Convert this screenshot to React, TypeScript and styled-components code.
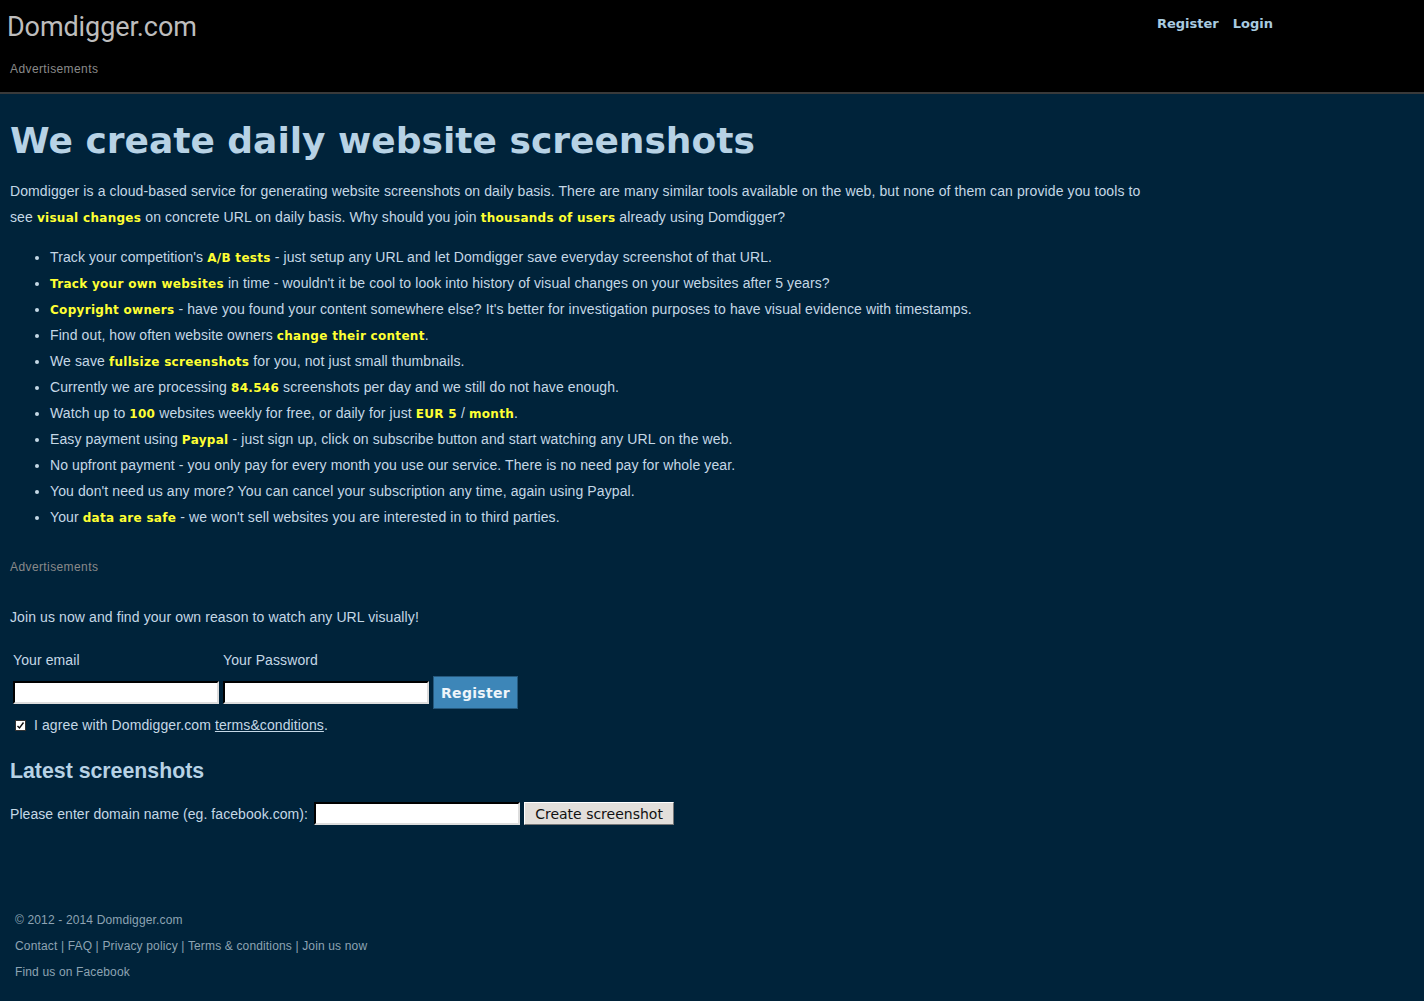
import styled, { createGlobalStyle } from 'styled-components';

const GlobalStyle = createGlobalStyle`
  html, body {
    margin: 0;
    padding: 0;
    background: #00233a;
  }
  body {
    font-family: "Liberation Sans", Arial, sans-serif;
    color: #c5d8e6;
  }
`;

const Header = styled.header`
  background: #000;
  height: 92px;
  border-bottom: 2px solid #3a3a3a;
`;

const HeaderTop = styled.div`
  display: flex;
  justify-content: space-between;
  width: 1273px;
`;

const Logo = styled.div`
  font-family: Roboto, "Liberation Sans", sans-serif;
  font-size: 27px;
  letter-spacing: -0.1px;
  color: #bdbdbd;
  padding: 9px 0 0 7px;
  line-height: 36px;
`;

const Nav = styled.nav`
  display: flex;
  gap: 14px;
  padding-top: 16px;
`;

const NavLink = styled.a`
  font-family: "DejaVu Sans", sans-serif;
  font-weight: bold;
  font-size: 13px;
  color: #a9cbe0;
  text-decoration: none;
`;

const Ads = styled.div<{ $top: number; $left?: number }>`
  font-size: 12px;
  letter-spacing: 0.4px;
  color: #8a8a8a;
  padding-left: ${p => p.$left ?? 0}px;
  margin-top: ${p => p.$top}px;
`;

const Main = styled.main`
  width: 1140px;
  padding: 0 0 0 10px;
`;

const Title = styled.h1`
  font-family: "DejaVu Sans", sans-serif;
  font-weight: bold;
  font-size: 36px;
  color: #b7d2e5;
  margin: 23px 0 13px;
  line-height: 48px;
`;

const Para = styled.p`
  font-size: 14px;
  line-height: 26px;
  letter-spacing: 0.1px;
  margin: 0;
`;

const Hi = styled.strong`
  font-family: "DejaVu Sans", sans-serif;
  font-size: 12px;
  line-height: 1;
  color: #ffff33;
  letter-spacing: 0.3px;
`;

const List = styled.ul`
  margin: 14px 0 0;
  padding-left: 40px;
  font-size: 14px;
  line-height: 26px;
  letter-spacing: 0.1px;
`;

const Join = styled.p`
  font-size: 14px;
  margin: 33px 0 0;
  line-height: 20px;
  letter-spacing: 0.1px;
`;

const FormTable = styled.div`
  display: grid;
  grid-template-columns: 210px 210px auto;
  margin: 24px 0 0 3px;
  align-items: center;
`;

const Label = styled.label`
  font-size: 14px;
  line-height: 18px;
  margin-bottom: 7px;
  letter-spacing: 0.1px;
`;

const TextInput = styled.input`
  width: 206px;
  height: 23px;
  flex-shrink: 0;
  box-sizing: border-box;
  border: 2px inset #ddd;
  border-top-color: #555;
  border-left-color: #555;
  background: #fff;
  margin: 0;
  padding: 1px 3px;
`;

const RegisterButton = styled.button`
  font-family: "DejaVu Sans", sans-serif;
  font-weight: bold;
  font-size: 14px;
  color: #eef5fa;
  background: #3d86b8;
  border: 1px solid #26597d;
  height: 33px;
  width: 85px;
  padding: 0;
  letter-spacing: 0.3px;
`;

const AgreeRow = styled.div`
  display: flex;
  align-items: center;
  gap: 8px;
  margin: 8px 0 0 5px;
  font-size: 14px;
  letter-spacing: 0.1px;
`;

const Check = styled.span`
  width: 11px;
  height: 11px;
  background: #fff;
  border: 1px solid #333;
  box-sizing: border-box;
  display: inline-flex;
  align-items: center;
  justify-content: center;
`;

const TermsLink = styled.a`
  color: #c5d8e6;
  text-decoration: underline;
`;

const SubTitle = styled.h2`
  font-family: "Liberation Sans", Arial, sans-serif;
  font-weight: bold;
  font-size: 21.3px;
  color: #b7d2e5;
  margin: 23px 0 0;
  line-height: 30px;
`;

const DomainRow = styled.div`
  display: flex;
  align-items: center;
  margin-top: 16px;
  font-size: 14px;
  letter-spacing: 0.07px;
`;

const DomainLabel = styled.span`
  margin-right: 6px;
`;

const GrayButton = styled.button`
  font-family: "DejaVu Sans", sans-serif;
  font-size: 14px;
  color: #111;
  background: #e2dfdb;
  border: 1px solid #fff;
  border-right-color: #777;
  border-bottom-color: #777;
  height: 23px;
  width: 150px;
  margin-left: 4px;
  padding: 0;
`;

const Footer = styled.footer`
  padding: 82px 0 20px 15px;
  font-size: 12px;
  letter-spacing: 0.15px;
  color: #8ea3b3;
  line-height: 26px;
`;

const FooterLink = styled.a`
  color: #8ea3b3;
  text-decoration: none;
`;

const bullets: React.ReactNode[] = [
  <>Track your competition's <Hi>A/B tests</Hi> - just setup any URL and let Domdigger save everyday screenshot of that URL.</>,
  <><Hi>Track your own websites</Hi> in time - wouldn't it be cool to look into history of visual changes on your websites after 5 years?</>,
  <><Hi>Copyright owners</Hi> - have you found your content somewhere else? It's better for investigation purposes to have visual evidence with timestamps.</>,
  <>Find out, how often website owners <Hi>change their content</Hi>.</>,
  <>We save <Hi>fullsize screenshots</Hi> for you, not just small thumbnails.</>,
  <>Currently we are processing <Hi>84.546</Hi> screenshots per day and we still do not have enough.</>,
  <>Watch up to <Hi>100</Hi> websites weekly for free, or daily for just <Hi>EUR 5</Hi> / <Hi>month</Hi>.</>,
  <>Easy payment using <Hi>Paypal</Hi> - just sign up, click on subscribe button and start watching any URL on the web.</>,
  <>No upfront payment - you only pay for every month you use our service. There is no need pay for whole year.</>,
  <>You don't need us any more? You can cancel your subscription any time, again using Paypal.</>,
  <>Your <Hi>data are safe</Hi> - we won't sell websites you are interested in to third parties.</>,
];

export default function App() {
  return (
    <>
      <GlobalStyle />
      <Header>
        <HeaderTop>
          <Logo>Domdigger.com</Logo>
          <Nav>
            <NavLink href="#">Register</NavLink>
            <NavLink href="#">Login</NavLink>
          </Nav>
        </HeaderTop>
        <Ads $top={17} $left={10}>Advertisements</Ads>
      </Header>
      <Main>
        <Title>We create daily website screenshots</Title>
        <Para>
          Domdigger is a cloud-based service for generating website screenshots on daily basis. There are many similar tools available on the web, but none of them can provide you tools to see <Hi>visual changes</Hi> on concrete URL on daily basis. Why should you join <Hi>thousands of users</Hi> already using Domdigger?
        </Para>
        <List>
          {bullets.map((b, i) => (
            <li key={i}>{b}</li>
          ))}
        </List>
        <Ads $top={30}>Advertisements</Ads>
        <Join>Join us now and find your own reason to watch any URL visually!</Join>
        <FormTable>
          <Label>Your email</Label>
          <Label>Your Password</Label>
          <span />
          <TextInput type="text" />
          <TextInput type="password" />
          <RegisterButton>Register</RegisterButton>
        </FormTable>
        <AgreeRow>
          <Check>
            <svg width="9" height="9" viewBox="0 0 9 9">
              <path d="M1.5 5 L3.5 7 L7.5 1.5" stroke="#111" strokeWidth="1.4" fill="none" />
            </svg>
          </Check>
          <span>
            I agree with Domdigger.com <TermsLink href="#">terms&amp;conditions</TermsLink>.
          </span>
        </AgreeRow>
        <SubTitle>Latest screenshots</SubTitle>
        <DomainRow>
          <DomainLabel>Please enter domain name (eg. facebook.com):</DomainLabel>
          <TextInput type="text" />
          <GrayButton>Create screenshot</GrayButton>
        </DomainRow>
      </Main>
      <Footer>
        <div>© 2012 - 2014 Domdigger.com</div>
        <div>
          <FooterLink href="#">Contact</FooterLink> | <FooterLink href="#">FAQ</FooterLink> | <FooterLink href="#">Privacy policy</FooterLink> | <FooterLink href="#">Terms &amp; conditions</FooterLink> | <FooterLink href="#">Join us now</FooterLink>
        </div>
        <div>
          <FooterLink href="#">Find us on Facebook</FooterLink>
        </div>
      </Footer>
    </>
  );
}
